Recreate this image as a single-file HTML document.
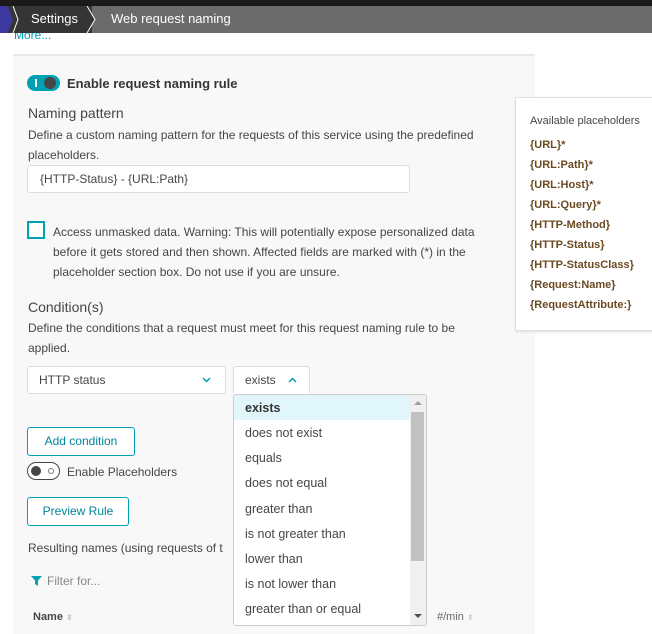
<!DOCTYPE html>
<html><head><style>
*{margin:0;padding:0;box-sizing:border-box}
body{width:652px;height:632px;overflow:hidden;background:#fff;font-family:"Liberation Sans",sans-serif;color:#454646;position:relative;font-size:12px}
.a{position:absolute;white-space:nowrap}
.btn{position:absolute;border:1px solid #00a1b2;border-radius:3px;color:#00849a;font-size:12px;text-align:center;background:#fff}
.dd{position:absolute;background:#fff;border:1px solid #ddd;border-radius:3px}
.opt{position:absolute;left:11px;font-size:12.5px;color:#454646}
.ph{position:absolute;left:14px;font-size:11px;font-weight:bold;color:#6b4a22}
</style></head><body>
<div class="a" style="left:14px;top:28px;color:#00a1b2;font-size:12px">More...</div>
<div class="a" style="left:0;top:0;width:652px;height:6px;background:#1a1a1a"></div>
<div class="a" style="left:0;top:6px;width:652px;height:27px;background:#6b6b6b"></div>
<div class="a" style="left:0;top:6px;width:92px;height:27px;background:#353535"></div>
<div class="a" style="left:0;top:6px;width:13px;height:27px;background:#3b38a0;clip-path:polygon(0 0,60% 0,100% 50%,60% 100%,0 100%)"></div>
<svg class="a" style="left:86px;top:6px" width="12" height="27"><path d="M1 0 L9 13.5 L1 27" fill="#353535" stroke="#fff" stroke-width="1"/></svg>
<svg class="a" style="left:12px;top:6px" width="8" height="27"><path d="M1 0 L6 13.5 L1 27" fill="none" stroke="#fff" stroke-width="1"/></svg>
<div class="a" style="left:31px;top:11px;color:#fff;font-size:13px">Settings</div>
<div class="a" style="left:111px;top:11px;color:#fff;font-size:13px">Web request naming</div>
<div class="a" style="left:13px;top:54px;width:522px;height:580px;background:#f8f8f8;border-top:2px solid #e8e8e8"></div>
<div class="a" style="left:27px;top:75px;width:33px;height:16px;border-radius:8px;background:#00a1b2"></div>
<div class="a" style="left:35px;top:79px;width:1.5px;height:8px;background:#fff"></div>
<div class="a" style="left:44px;top:77px;width:12px;height:12px;border-radius:6px;background:#454646"></div>
<div class="a" style="left:67px;top:76px;font-size:13px;font-weight:bold;color:#353535">Enable request naming rule</div>
<div class="a" style="left:28px;top:105px;font-size:14px">Naming pattern</div>
<div class="a" style="left:28px;top:128px;font-size:12px">Define a custom naming pattern for the requests of this service using the predefined</div>
<div class="a" style="left:28px;top:148px;font-size:12px">placeholders.</div>
<div class="dd" style="left:27px;top:165px;width:383px;height:28px"></div>
<div class="a" style="left:40px;top:172px;font-size:12px">{HTTP-Status} - {URL:Path}</div>
<div class="a" style="left:27px;top:221px;width:18px;height:18px;border:2px solid #00a1b2;background:#fff"></div>
<div class="a" style="left:53px;top:222px;font-size:12px;line-height:20px;white-space:normal;width:452px">Access unmasked data. Warning: This will potentially expose personalized data before it gets stored and then shown. Affected fields are marked with (*) in the placeholder section box. Do not use if you are unsure.</div>
<div class="a" style="left:28px;top:299px;font-size:14px">Condition(s)</div>
<div class="a" style="left:28px;top:321px;font-size:12px">Define the conditions that a request must meet for this request naming rule to be</div>
<div class="a" style="left:28px;top:341px;font-size:12px">applied.</div>
<div class="dd" style="left:27px;top:366px;width:199px;height:28px"></div>
<div class="a" style="left:39px;top:373px;font-size:12px">HTTP status</div>
<svg class="a" style="left:202px;top:377px" width="9" height="6"><path d="M1 1 L4.5 4.5 L8 1" fill="none" stroke="#00a1b2" stroke-width="1.5"/></svg>
<div class="dd" style="left:233px;top:366px;width:77px;height:28px;border-bottom:none"></div>
<div class="a" style="left:245px;top:373px;font-size:12px">exists</div>
<svg class="a" style="left:288px;top:377px" width="9" height="6"><path d="M1 5 L4.5 1.5 L8 5" fill="none" stroke="#00a1b2" stroke-width="1.5"/></svg>
<div class="btn" style="left:27px;top:427px;width:108px;height:29px;line-height:27px">Add condition</div>
<div class="a" style="left:27px;top:462px;width:33px;height:18px;border-radius:9px;border:1.5px solid #454646;background:#fff"></div>
<div class="a" style="left:31px;top:466px;width:10px;height:10px;border-radius:5px;background:#454646"></div>
<div class="a" style="left:48px;top:468px;width:6px;height:6px;border-radius:3px;border:1px solid #777"></div>
<div class="a" style="left:67px;top:465px;font-size:12px">Enable Placeholders</div>
<div class="btn" style="left:27px;top:497px;width:102px;height:29px;line-height:27px">Preview Rule</div>
<div class="a" style="left:28px;top:541px;font-size:12px">Resulting names (using requests of t</div>
<svg class="a" style="left:31px;top:576px" width="11" height="10"><path d="M0 0 H11 L7 4.5 V10 L4 8 V4.5 Z" fill="#00a1b2"/></svg>
<div class="a" style="left:47px;top:574px;font-size:12px;color:#888">Filter for...</div>
<div class="a" style="left:33px;top:611px;font-size:11px;font-weight:bold">Name <span style="color:#ccc;font-size:8px">⬍</span></div>
<div class="a" style="left:437px;top:611px;font-size:11px;color:#666">#/min <span style="color:#ccc;font-size:8px">⬍</span></div>
<div class="dd" style="left:233px;top:394px;width:194px;height:232px;border-color:#ccc;overflow:hidden">
<div class="a" style="left:0;top:0;width:176px;height:25px;background:#e1f6fa"></div>
<div class="opt" style="top:6px;font-weight:bold;color:#353535">exists</div>
<div class="opt" style="top:31px">does not exist</div>
<div class="opt" style="top:56px">equals</div>
<div class="opt" style="top:81px">does not equal</div>
<div class="opt" style="top:107px">greater than</div>
<div class="opt" style="top:132px">is not greater than</div>
<div class="opt" style="top:157px">lower than</div>
<div class="opt" style="top:182px">is not lower than</div>
<div class="opt" style="top:207px">greater than or equal</div>
<div class="a" style="left:176px;top:0;width:17px;height:232px;background:#f0f0f0"></div>
<div class="a" style="left:177px;top:17px;width:13px;height:149px;background:#c1c1c1"></div>
<div class="a" style="left:180px;top:6px;width:0;height:0;border:4px solid transparent;border-bottom:4px solid #a0a0a0;border-top:none"></div>
<div class="a" style="left:180px;top:219px;width:0;height:0;border:4px solid transparent;border-top:4px solid #505050;border-bottom:none"></div>
</div>
<div class="a" style="left:515px;top:97px;width:140px;height:234px;background:#fff;border:1px solid #e0e0e0;border-radius:2px;box-shadow:0 1px 2px #ddd">
<div class="a" style="left:14px;top:17px;font-size:11px;color:#454646">Available placeholders</div>
<div class="ph" style="top:41px">{URL}*</div>
<div class="ph" style="top:61px">{URL:Path}*</div>
<div class="ph" style="top:81px">{URL:Host}*</div>
<div class="ph" style="top:101px">{URL:Query}*</div>
<div class="ph" style="top:121px">{HTTP-Method}</div>
<div class="ph" style="top:141px">{HTTP-Status}</div>
<div class="ph" style="top:161px">{HTTP-StatusClass}</div>
<div class="ph" style="top:181px">{Request:Name}</div>
<div class="ph" style="top:201px">{RequestAttribute:}</div>
</div>
</body></html>
